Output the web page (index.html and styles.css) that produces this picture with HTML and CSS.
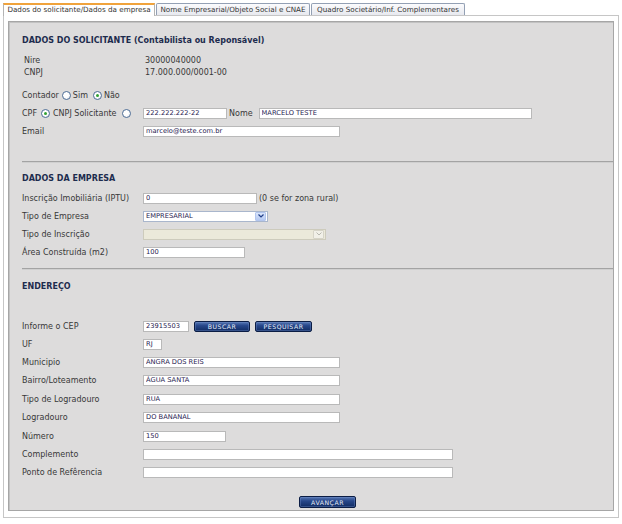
FILE: index.html
```html
<!DOCTYPE html>
<html lang="pt-BR">
<head>
<meta charset="utf-8">
<title>Dados do solicitante</title>
<link rel="stylesheet" href="styles.css">
</head>
<body>
<div class="page">
  <div class="tabs">
    <div class="tab active t1">Dados do solicitante/Dados da empresa</div>
    <div class="tab t2">Nome Empresarial/Objeto Social e CNAE</div>
    <div class="tab t3">Quadro Societário/Inf. Complementares</div>
  </div>
  <div class="panel">
    <div class="inner">
      <h2 class="title">DADOS DO SOLICITANTE (Contabilista ou Reponsável)</h2>
      <div class="info">
        <div class="info-row"><span class="ilabel">Nire</span><span>30000040000</span></div>
        <div class="info-row"><span class="ilabel">CNPJ</span><span>17.000.000/0001-00</span></div>
      </div>
      <div class="row r-contador">
        <span>Contador</span>
        <span class="radio r-sim"></span><span>Sim</span>
        <span class="radio checked r-nao"></span><span>Não</span>
      </div>
      <div class="row">
        <div class="lbl lbl-flex">
          <span>CPF</span>
          <span class="radio checked r-cpf"></span>
          <span class="cnpj-txt">CNPJ Solicitante</span>
          <span class="radio r-cnpj"></span>
        </div>
        <input class="field w-cpf" type="text" value="222.222.222-22">
        <span class="nome-lbl">Nome</span>
        <input class="field w-nome" type="text" value="MARCELO TESTE">
      </div>
      <div class="row">
        <span class="lbl">Email</span>
        <input class="field w-197" type="text" value="marcelo@teste.com.br">
      </div>

      <hr class="sep sep1">

      <h2 class="title title2">DADOS DA EMPRESA</h2>
      <div class="row r-first">
        <span class="lbl">Inscrição Imobiliária (IPTU)</span>
        <input class="field w-iptu" type="text" value="0">
        <span class="hint">(0 se for zona rural)</span>
      </div>
      <div class="row">
        <span class="lbl">Tipo de Empresa</span>
        <div class="select w-emp">
          <span class="sel-text">EMPRESARIAL</span>
          <span class="sel-btn"><svg width="6" height="4" viewBox="0 0 6 4"><path d="M0.5 0.5 L3 3 L5.5 0.5" fill="none" stroke="#23408a" stroke-width="1.2"/></svg></span>
        </div>
      </div>
      <div class="row">
        <span class="lbl">Tipo de Inscrição</span>
        <div class="select disabled w-insc">
          <span class="sel-text"></span>
          <span class="sel-btn"><svg width="6" height="4" viewBox="0 0 6 4"><path d="M0.5 0.5 L3 3 L5.5 0.5" fill="none" stroke="#b8b8b0" stroke-width="1"/></svg></span>
        </div>
      </div>
      <div class="row">
        <span class="lbl">Área Construída (m2)</span>
        <input class="field w-area" type="text" value="100">
      </div>

      <hr class="sep sep2">

      <h2 class="title title3">ENDEREÇO</h2>
      <div class="row r-cep">
        <span class="lbl">Informe o CEP</span>
        <input class="field w-cep" type="text" value="23915503">
        <button class="btn b-buscar" type="button">BUSCAR</button>
        <button class="btn b-pesq" type="button">PESQUISAR</button>
      </div>
      <div class="row">
        <span class="lbl">UF</span>
        <input class="field w-uf" type="text" value="RJ">
      </div>
      <div class="row">
        <span class="lbl">Municipio</span>
        <input class="field w-197" type="text" value="ANGRA DOS REIS">
      </div>
      <div class="row">
        <span class="lbl">Bairro/Loteamento</span>
        <input class="field w-197" type="text" value="ÁGUA SANTA">
      </div>
      <div class="row nudge">
        <span class="lbl">Tipo de Logradouro</span>
        <input class="field w-197" type="text" value="RUA">
      </div>
      <div class="row">
        <span class="lbl">Logradouro</span>
        <input class="field w-197" type="text" value="DO BANANAL">
      </div>
      <div class="row nudge">
        <span class="lbl">Número</span>
        <input class="field w-num" type="text" value="150">
      </div>
      <div class="row">
        <span class="lbl">Complemento</span>
        <input class="field w-310" type="text" value="">
      </div>
      <div class="row">
        <span class="lbl">Ponto de Refêrencia</span>
        <input class="field w-310" type="text" value="">
      </div>

      <div class="footer">
        <button class="btn b-avancar" type="button">AVANÇAR</button>
      </div>
    </div>
  </div>
</div>
</body>
</html>
```

FILE: styles.css
```css
* { box-sizing: border-box; }

body {
  margin: 0;
  background: #ffffff;
  font-family: "DejaVu Sans", Verdana, sans-serif;
  font-size: 8px;
  color: #383838;
}

.page {
  padding: 3px 3px 0 3px;
}

/* Tabs */
.tabs {
  display: flex;
  align-items: flex-start;
  height: 13px;
  margin-bottom: -1px;
  position: relative;
  z-index: 1;
}

.tab {
  height: 12px;
  line-height: 11px;
  margin-right: 1px;
  border: 1px solid #93a0b4;
  border-bottom: none;
  border-radius: 2px 2px 0 0;
  background: linear-gradient(#fbfbfd, #e7e9ef);
  color: #333;
  font-size: 7.2px;
  text-align: center;
  white-space: nowrap;
  overflow: hidden;
}

.tab.active {
  height: 13px;
  line-height: 10px;
  background: #ffffff;
  border-color: #b4b4b4;
  border-top: 2px solid #f0a33c;
  border-radius: 0;
}

.t1 { width: 152px; }
.t2 { width: 154px; }
.t3 { width: 154px; }

/* Panel */
.panel {
  border: 1px solid #c6c6c6;
  padding: 5px 4px 6px 4px;
  background: #ffffff;
}

.inner {
  height: 490px;
  background: #dddcdc;
  border: 1px solid #a6a6a6;
  box-shadow: inset 1px 1px 0 #c2c2c2;
  padding: 13px 0 0 13px;
}

.title {
  margin: 0;
  font-size: 8px;
  line-height: 12px;
  font-weight: bold;
  color: #1d2c4e;
}

.title2 { margin-top: 10px; }
.title3 { margin-top: 11px; }

.info {
  margin-top: 8px;
  padding-left: 2px;
}

.info-row {
  display: flex;
  height: 12px;
  line-height: 12px;
}

.ilabel { width: 121px; }

.row {
  display: flex;
  align-items: center;
  height: 18px;
  white-space: nowrap;
}

.r-contador { margin-top: 7px; }
.r-first { margin-top: 4px; }
.r-cep { margin-top: 24px; }
.nudge { margin-top: 1px; }

.lbl {
  width: 121px;
  flex: none;
}

.lbl-flex {
  display: flex;
  align-items: center;
}

/* Radios */
.radio {
  position: relative;
  width: 9px;
  height: 9px;
  flex: none;
  border: 1px solid #4f6f98;
  border-radius: 50%;
  background: radial-gradient(circle at 40% 40%, #ffffff 40%, #dfe3ea 100%);
}

.radio.checked::after {
  content: "";
  position: absolute;
  left: 2px;
  top: 2px;
  width: 3px;
  height: 3px;
  border-radius: 50%;
  background: #33a133;
}

.r-sim { margin: 0 2px 0 3px; }
.r-nao { margin: 0 2px 0 5px; }
.r-cpf { margin: 0 3px 0 4px; }
.r-cnpj { margin-left: 5px; }

/* Inputs */
.field {
  height: 11px;
  margin: 0;
  padding: 0 2px;
  border: 1px solid #b9b9b9;
  background: #ffffff;
  font-family: "DejaVu Sans", Verdana, sans-serif;
  font-size: 6.7px;
  line-height: 9px;
  color: #1f2250;
  outline: none;
}

.w-cpf { width: 84px; }
.w-nome { width: 273px; }
.w-197 { width: 197px; }
.w-iptu { width: 114px; }
.w-area { width: 102px; }
.w-cep { width: 46px; }
.w-uf { width: 19px; }
.w-num { width: 83px; }
.w-310 { width: 310px; }

.nome-lbl { margin: 0 6px 0 2px; }
.hint { margin-left: 2px; }

/* Selects */
.select {
  display: flex;
  align-items: center;
  justify-content: space-between;
  height: 11px;
  padding: 0 1px 0 2px;
  border: 1px solid #a9b6cc;
  background: #ffffff;
  font-size: 6.7px;
  color: #1f2250;
}

.sel-btn {
  display: flex;
  align-items: center;
  justify-content: center;
  width: 11px;
  height: 9px;
  border: 1px solid #b3c6ee;
  border-radius: 1px;
  background: linear-gradient(#dbe6fb, #b5c9f2);
}

.select.disabled {
  background: #ebe9da;
  border-color: #cdcbbc;
}

.select.disabled .sel-btn {
  background: #f1f0e8;
  border-color: #d6d4c8;
}

.w-emp { width: 125px; }
.w-insc { width: 183px; }

/* Separators */
.sep {
  margin: 0;
  height: 2px;
  border: none;
  border-top: 1px solid #a3a3a3;
  border-bottom: 1px solid #cfcfcf;
}

.sep1 { margin-top: 21px; }
.sep2 { margin-top: 7px; }

/* Buttons */
.btn {
  height: 11px;
  margin: 0;
  padding: 0;
  border: 1px solid #0b1d45;
  border-radius: 2px;
  background: linear-gradient(#5677b3 0%, #27478a 40%, #112c63 100%);
  box-shadow: inset 0 0 0 1px rgba(120, 150, 205, 0.35);
  color: #e6ecf7;
  font-family: "DejaVu Sans", Verdana, sans-serif;
  font-size: 6.2px;
  line-height: 9px;
  letter-spacing: 0.5px;
}

.b-buscar { width: 56px; margin-left: 5px; }
.b-pesq { width: 57px; margin-left: 5px; }

.footer {
  margin-top: 15px;
  padding-left: 277px;
}

.b-avancar {
  display: block;
  width: 57px;
  height: 12px;
}
```
